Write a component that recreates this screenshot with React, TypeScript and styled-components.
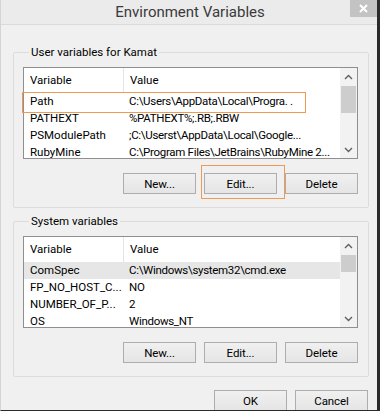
import React from 'react';
import styled, { createGlobalStyle } from 'styled-components';

const Global = createGlobalStyle`
  html, body { margin: 0; padding: 0; background: #ffffff; }
  body { font-family: Roboto, "Noto Sans", sans-serif; }
  * { box-sizing: border-box; }
`;

const UI = `Roboto, "Noto Sans", "Liberation Sans", sans-serif`;

const Dialog = styled.div`
  position: relative;
  width: 380px;
  height: 411px;
  background: #f0f0f0;
  border-left: 1px solid #d4d4d4;
  border-right: 3px solid #2b2b2b;
  border-bottom: 1px solid #2b2b2b;
  overflow: hidden;
  display: flex;
  flex-direction: column;
  font-family: ${UI};
  font-size: 11.5px;
  color: #000;
`;

const TitleBar = styled.div`
  height: 25px;
  flex: none;
  background: #ebebeb;
  border-bottom: 1px solid #dadada;
  display: grid;
  grid-template-columns: 27px 1fr 27px;
  align-items: start;
`;

const Title = styled.div`
  grid-column: 2;
  text-align: center;
  font-size: 15px;
  line-height: 24px;
  color: #3a3a3a;
  padding-left: 2px;
`;

const CloseBtn = styled.div`
  grid-column: 3;
  height: 17px;
  background: #c3c3c3;
  display: flex;
  align-items: center;
  justify-content: center;
`;

const Body = styled.div`
  flex: 1;
  padding: 20px 8px 0 12px;
  display: flex;
  flex-direction: column;
`;

const Group = styled.fieldset<{ $gap?: number }>`
  margin: ${(p) => p.$gap ?? 0}px 0 0 0;
  padding: 7px 10px 13px 9px;
  border: 1px solid #dcdcdc;
  border-radius: 2px;
  min-width: 0;
`;

const Legend = styled.legend`
  margin-left: 6px;
  padding: 0 2px;
  font-size: 11.5px;
  line-height: 15px;
`;

const ListBox = styled.div`
  height: 92px;
  border: 1px solid #8f8f8f;
  background: #fff;
  display: flex;
  overflow: hidden;
`;

const ListMain = styled.div`
  flex: 1;
  display: flex;
  flex-direction: column;
  min-width: 0;
`;

const HeaderRow = styled.div`
  height: 25px;
  flex: none;
  display: grid;
  grid-template-columns: 100px 1fr;
`;

const HeaderCell = styled.div<{ $divider?: boolean }>`
  padding-left: 6px;
  line-height: 25px;
  border-right: ${(p) => (p.$divider ? '1px solid #e5e5e5' : 'none')};
`;

const Row = styled.div<{ $selected?: boolean }>`
  height: 17px;
  flex: none;
  display: grid;
  grid-template-columns: 100px 1fr;
  background: ${(p) => (p.$selected ? '#e6e6e6' : 'transparent')};
`;

const Cell = styled.div<{ $first?: boolean }>`
  padding-left: ${(p) => (p.$first ? 6 : 5)}px;
  line-height: 17px;
  white-space: nowrap;
  overflow: hidden;
  letter-spacing: ${(p) => (p.$first ? '0' : '-0.3px')};
`;

const ScrollBar = styled.div`
  width: 17px;
  flex: none;
  background: #f2f2f2;
  display: flex;
  flex-direction: column;
`;

const ArrowBtn = styled.div`
  height: 17px;
  flex: none;
  display: flex;
  align-items: center;
  justify-content: center;
`;

const Track = styled.div`
  flex: 1;
  padding: 1px 1px 0 1px;
`;

const Thumb = styled.div<{ $h: number }>`
  height: ${(p) => p.$h}px;
  background: #cdcdcd;
`;

const ButtonRow = styled.div`
  display: flex;
  justify-content: flex-end;
  gap: 8px;
  margin-top: 14px;
`;

const Button = styled.div`
  width: 73px;
  height: 21px;
  border: 1px solid #adadad;
  background: linear-gradient(#f0f0f0, #e5e5e5);
  display: flex;
  align-items: center;
  justify-content: center;
  font-size: 11.5px;
  letter-spacing: -0.1px;
  color: #000;
`;

const Footer = styled.div`
  display: flex;
  justify-content: flex-end;
  gap: 8px;
  margin-top: 13px;
  padding-right: 1px;
`;

const Annotation = styled.div<{ $l: number; $t: number; $w: number; $h: number }>`
  position: absolute;
  left: ${(p) => p.$l}px;
  top: ${(p) => p.$t}px;
  width: ${(p) => p.$w}px;
  height: ${(p) => p.$h}px;
  border: 1.5px solid #ef9a52;
  pointer-events: none;
`;

const Chevron = ({ up }: { up?: boolean }) => (
  <svg width="9" height="6" viewBox="0 0 9 6">
    <polyline
      points={up ? '1,5 4.5,1.5 8,5' : '1,1 4.5,4.5 8,1'}
      fill="none"
      stroke="#606060"
      strokeWidth="1.4"
    />
  </svg>
);

type Item = { name: string; value: string; selected?: boolean };

const VarList = ({ items, thumb }: { items: Item[]; thumb: number }) => (
  <ListBox>
    <ListMain>
      <HeaderRow>
        <HeaderCell $divider>Variable</HeaderCell>
        <HeaderCell>Value</HeaderCell>
      </HeaderRow>
      {items.map((it) => (
        <Row key={it.name} $selected={it.selected}>
          <Cell $first>{it.name}</Cell>
          <Cell>{it.value}</Cell>
        </Row>
      ))}
    </ListMain>
    <ScrollBar>
      <ArrowBtn>
        <Chevron up />
      </ArrowBtn>
      <Track>
        <Thumb $h={thumb} />
      </Track>
      <ArrowBtn>
        <Chevron />
      </ArrowBtn>
    </ScrollBar>
  </ListBox>
);

const userVars: Item[] = [
  { name: 'Path', value: 'C:\\Users\\AppData\\Local\\Progra. .' },
  { name: 'PATHEXT', value: '%PATHEXT%;.RB;.RBW' },
  { name: 'PSModulePath', value: ';C:\\Userst\\AppData\\Local\\Google...' },
  { name: 'RubyMine', value: 'C:\\Program Files\\JetBrains\\RubyMine 2...' },
];

const sysVars: Item[] = [
  { name: 'ComSpec', value: 'C:\\Windows\\system32\\cmd.exe', selected: true },
  { name: 'FP_NO_HOST_C...', value: 'NO' },
  { name: 'NUMBER_OF_P...', value: '2' },
  { name: 'OS', value: 'Windows_NT' },
];

export default function App() {
  return (
    <>
      <Global />
      <Dialog>
        <TitleBar>
          <Title>Environment Variables</Title>
          <CloseBtn>
            <svg width="9" height="9" viewBox="0 0 9 9">
              <path d="M1 1L8 8M8 1L1 8" stroke="#fff" strokeWidth="2" />
            </svg>
          </CloseBtn>
        </TitleBar>
        <Body>
          <Group>
            <Legend>User variables for Kamat</Legend>
            <VarList items={userVars} thumb={27} />
            <ButtonRow>
              <Button>New...</Button>
              <Button>Edit...</Button>
              <Button>Delete</Button>
            </ButtonRow>
          </Group>
          <Group $gap={6}>
            <Legend>System variables</Legend>
            <VarList items={sysVars} thumb={17} />
            <ButtonRow>
              <Button>New...</Button>
              <Button>Edit...</Button>
              <Button>Delete</Button>
            </ButtonRow>
          </Group>
          <Footer>
            <Button>OK</Button>
            <Button>Cancel</Button>
          </Footer>
        </Body>
        <Annotation $l={21} $t={92} $w={284} $h={21} />
        <Annotation $l={200} $t={165} $w={84} $h={34} />
      </Dialog>
    </>
  );
}
